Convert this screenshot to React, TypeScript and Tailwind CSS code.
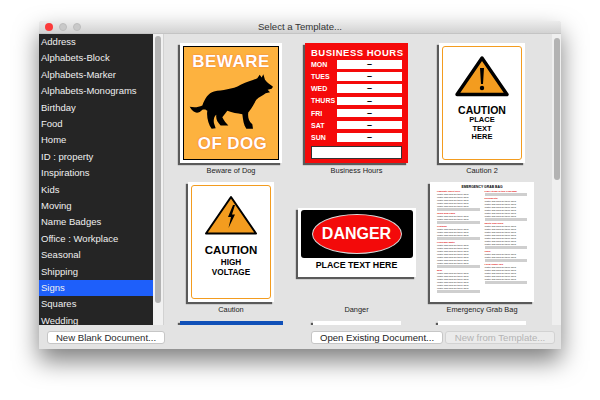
import React from 'react';

const categories = [
  'Address', 'Alphabets-Block', 'Alphabets-Marker', 'Alphabets-Monograms', 'Birthday', 'Food', 'Home',
  'ID : property', 'Inspirations', 'Kids', 'Moving', 'Name Badges', 'Office : Workplace', 'Seasonal',
  'Shipping', 'Signs', 'Squares', 'Wedding',
];

const days = ['MON', 'TUES', 'WED', 'THURS', 'FRI', 'SAT', 'SUN'];

const cardShadow = 'shadow-[-2px_2px_1px_#5a5a5a]';

const BewareOfDog = () => (
  <div className={`w-[102px] h-[120px] bg-white p-[3px] ${cardShadow}`}>
    <div className="h-full border border-black bg-[#fdb23f] flex flex-col items-center pt-[6px] text-white font-bold [text-shadow:0_0_1.5px_#ee5a35]">
      <div className="text-[17px] leading-[18px] tracking-[0.5px]">BEWARE</div>
      <svg viewBox="60 115 255 170" className="w-[85px] h-[57px] mt-[2px]">
        <path
          fill="#000"
          d="M62 216 C75 218 88 218 100 212 C108 190 118 175 135 170 C160 165 190 165 215 150 C235 140 255 135 265 130 L272 120 L278 128 L283 118 L288 135 C295 145 305 150 312 156 L308 162 L296 165 L303 172 L290 175 C283 182 270 185 262 195 C250 215 245 225 238 232 C236 245 238 260 250 268 L252 282 L232 282 C224 270 222 255 220 238 C205 235 190 235 175 228 C170 235 165 240 160 247 C165 258 172 265 178 272 L155 272 C145 262 140 252 142 240 C135 245 133 255 135 265 L140 280 L128 282 C118 268 112 245 115 228 C112 225 108 222 100 225 C88 238 75 238 62 216 Z"
        />
      </svg>
      <div className="text-[17px] leading-[18px] mt-[5px] tracking-[0.4px] pl-[3px]">OF DOG</div>
    </div>
  </div>
);

const BusinessHours = () => (
  <div className={`w-[103px] h-[120px] bg-[#f50a0a] px-[6px] pt-[4px] ${cardShadow}`}>
    <div className="text-white font-bold text-[9.5px] leading-[12px] tracking-[0.5px] text-center whitespace-nowrap">BUSINESS HOURS</div>
    <div className="mt-[1px] flex flex-col gap-[3.7px]">
      {days.map((day) => (
        <div key={day} className="flex items-center h-[8.5px]">
          <span className="w-[26px] text-white font-bold text-[7px] leading-none">{day}</span>
          <span className="flex-1 h-full bg-white text-black font-bold text-[9px] leading-[8px] text-center">–</span>
        </div>
      ))}
    </div>
    <div className="mt-[4px] h-[13px] bg-white border border-[#333]" />
  </div>
);

const Triangle = ({ bolt }: { bolt: boolean }) => (
  <svg viewBox="0 0 54 42" className="w-[54px] h-[42px]">
    <path
      d="M27 3 L52 39.5 L2 39.5 Z"
      fill="#f39c1f"
      stroke="#000"
      strokeWidth={bolt ? 2 : 3.4}
      strokeLinejoin="round"
    />
    {bolt ? (
      <path d="M29 11 L24 23 L27 23 L24.5 34 L31 20.5 L28 20.5 L31 11 Z" fill="#000" />
    ) : (
      <>
        <path d="M25 13 L29 13 L28 29 L26 29 Z" fill="#000" />
        <circle cx="27" cy="33" r="2.2" fill="#000" />
      </>
    )}
  </svg>
);

const CautionSign = ({ lines, bolt, big }: { lines: string[]; bolt: boolean; big: boolean }) => (
  <div className={`w-[86px] h-[120px] bg-white p-[3px] ${cardShadow}`}>
    <div className="h-full border-[1.3px] border-[#f39c1f] rounded-[3px] flex flex-col items-center pt-[8px] text-black font-bold text-center">
      <Triangle bolt={bolt} />
      <div className={big ? 'text-[11.5px] leading-[13px] mt-[8px]' : 'text-[10.5px] leading-[12px] mt-[7px]'}>CAUTION</div>
      {lines.map((line) => (
        <div key={line} className={big ? 'text-[8.2px] leading-[10px] mt-[0.5px]' : 'text-[7.5px] leading-[8.5px]'}>{line}</div>
      ))}
    </div>
  </div>
);

const Danger = () => (
  <div className={`w-[118px] h-[69px] bg-white pt-[2px] px-[3px] ${cardShadow}`}>
    <div className="h-[48px] bg-black rounded-[3px] flex items-center justify-center">
      <div className="w-[90px] h-[40px] rounded-[50%] bg-[#f30a0a] border border-[#d8d8d8] flex items-center justify-center text-white font-bold text-[16px]">DANGER</div>
    </div>
    <div className="text-black font-bold text-[8.8px] leading-[15px] text-center whitespace-nowrap">PLACE TEXT HERE</div>
  </div>
);

const grabColumns = [
  [
    { head: 'Laminate Sheet here', lines: 5 },
    { head: 'Tools and Plans', lines: 2 },
    { head: 'Clothing', lines: 3 },
    { head: 'Food and Water', lines: 7 },
    { head: 'Misc', lines: 6 },
  ],
  [
    { head: 'Place items in this Grab Bag', lines: 0 },
    { head: 'Documents', lines: 6 },
    { head: 'Safety and Tools', lines: 7 },
    { head: 'Cash', lines: 2 },
    { head: 'Local Radio Info', lines: 5 },
  ],
];

const GrabBag = () => (
  <div className={`w-[104px] h-[120px] bg-white px-[7px] pt-[3px] overflow-hidden ${cardShadow}`}>
    <div className="text-black font-bold text-[3.4px] leading-[4px] text-center">EMERGENCY GRAB BAG</div>
    <div className="mt-[1px] grid grid-cols-2 gap-[5px]">
      {grabColumns.map((col, i) => (
        <div key={i} className="flex flex-col gap-[1.5px]">
          {col.map((sec) => (
            <div key={sec.head} className="whitespace-nowrap">
              <div className="text-[#e01010] font-bold text-[2.4px] leading-[3px]">{sec.head}</div>
              {Array.from({ length: sec.lines }).map((_, n) => (
                <div key={n} className="text-[#222] text-[2.4px] leading-[3px]">Water and food for three days</div>
              ))}
              <div className="h-[2.5px] bg-[#cfcfcf]" />
            </div>
          ))}
        </div>
      ))}
    </div>
  </div>
);

const Cell = ({ label, children }: { label: string; children: React.ReactNode }) => (
  <div className="flex flex-col items-center h-[139px]">
    <div className="h-[120px] flex items-center justify-center">{children}</div>
    <div className="mt-[2.5px] text-[7.4px] leading-[9px] text-[#1c1c1c] whitespace-nowrap">{label}</div>
  </div>
);

export default function App() {
  return (
    <div className="w-[600px] h-[400px] bg-white overflow-hidden pt-[21px] pl-[39px] font-['Liberation_Sans',Arial,sans-serif]">
      <div className="w-[522px] h-[328px] flex flex-col bg-[#e3e3e3] rounded-t-[3px] overflow-hidden shadow-[0_12px_24px_rgba(0,0,0,0.5)]">
        {/* Title bar */}
        <div className="relative h-[13px] shrink-0 flex items-center justify-center bg-gradient-to-b from-[#ececec] to-[#d2d2d2] border-b border-[#c4c4c4]">
          <div className="absolute left-[6px] top-[2px] flex gap-[6px]">
            <span className="w-[8px] h-[8px] rounded-full bg-[#fc3b3b]" />
            <span className="w-[8px] h-[8px] rounded-full bg-[#c9c9c9] border border-[#bcbcbc]" />
            <span className="w-[8px] h-[8px] rounded-full bg-[#c9c9c9] border border-[#bcbcbc]" />
          </div>
          <span className="text-[9.6px] leading-none text-[#333]">Select a Template...</span>
        </div>

        <div className="flex h-[291px] shrink-0">
          {/* Category list */}
          <div className="w-[114px] shrink-0 bg-[#252525] overflow-hidden">
            {categories.map((name) => (
              <div
                key={name}
                className={`h-[16.4px] px-[2px] flex items-center text-[9.5px] text-[#f0f0f0] whitespace-nowrap ${name === 'Signs' ? 'bg-[#1e5ffa]' : ''}`}
              >
                {name}
              </div>
            ))}
          </div>
          <div className="w-[11px] shrink-0 bg-[#f1f1f1] border-r border-[#d2d2d2] pt-[2px] pl-[2px]">
            <div className="w-[6px] h-[267px] rounded-full bg-[#b3b3b3]" />
          </div>

          {/* Template thumbnails */}
          <div className="flex-1 overflow-hidden pt-[9px] pl-[4px]">
            <div className="grid grid-cols-[126px_125px_126px]">
              <Cell label="Beware of Dog"><BewareOfDog /></Cell>
              <Cell label="Business Hours"><BusinessHours /></Cell>
              <Cell label="Caution 2"><CautionSign bolt={false} big={false} lines={['PLACE', 'TEXT', 'HERE']} /></Cell>
              <Cell label="Caution"><CautionSign bolt big lines={['HIGH', 'VOLTAGE']} /></Cell>
              <Cell label="Danger"><Danger /></Cell>
              <Cell label="Emergency Grab Bag"><GrabBag /></Cell>
              <div className="flex justify-center"><div className={`w-[103px] h-[20px] bg-[#1050b8] ${cardShadow}`} /></div>
              <div className="flex justify-center"><div className={`w-[88px] h-[20px] bg-white ${cardShadow}`} /></div>
              <div className="flex justify-center"><div className={`w-[88px] h-[20px] bg-white ${cardShadow}`} /></div>
            </div>
          </div>
          <div className="w-[9px] shrink-0 bg-[#efefef] pt-[4px] pl-[1.5px]">
            <div className="w-[6px] h-[142px] rounded-full bg-[#b3b3b3]" />
          </div>
        </div>

        {/* Buttons */}
        <div className="flex-1 flex items-start pt-[6px] pl-[8px] pr-[6px] text-[9.6px]">
          <button className="w-[118px] h-[13px] bg-white border border-[#c6c6c6] rounded-[3px] leading-none text-[#2a2a2a] whitespace-nowrap">New Blank Document...</button>
          <button className="ml-auto w-[132px] h-[13px] bg-white border border-[#c6c6c6] rounded-[3px] leading-none text-[#1c1c1c] whitespace-nowrap">Open Existing Document...</button>
          <button className="ml-[2px] w-[110px] h-[13px] bg-[#ebebeb] border border-[#d2d2d2] rounded-[3px] leading-none text-[#b4b4b4] whitespace-nowrap">New from Template...</button>
        </div>
      </div>
    </div>
  );
}
